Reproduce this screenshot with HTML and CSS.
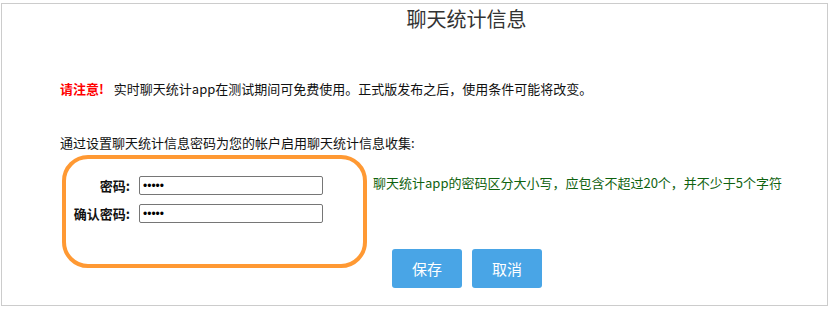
FILE: index.html
```html
<!DOCTYPE html>
<html lang="zh-CN">
<head>
<meta charset="utf-8">
<title>聊天统计信息</title>
<link rel="stylesheet" href="styles.css">
</head>
<body>
<div class="panel">
  <h1 class="title">聊天统计信息</h1>
  <p class="notice"><span class="warn">请注意!</span>实时聊天统计app在测试期间可免费使用。正式版发布之后，使用条件可能将改变。</p>
  <p class="intro">通过设置聊天统计信息密码为您的帐户启用聊天统计信息收集:</p>
  <div class="form-row">
    <div class="pw-box">
      <label class="lbl" for="pw1">密码:</label>
      <input class="field" id="pw1" type="password" value="abcde">
      <label class="lbl" for="pw2">确认密码:</label>
      <input class="field" id="pw2" type="password" value="abcde">
    </div>
    <div class="side">
      <p class="hint">聊天统计app的密码区分大小写，应包含不超过20个，并不少于5个字符</p>
      <div class="actions">
        <button class="btn">保存</button>
        <button class="btn">取消</button>
      </div>
    </div>
  </div>
</div>
</body>
</html>
```

FILE: styles.css
```css
html, body {
  margin: 0;
  padding: 0;
  background: #fff;
}
body {
  font-family: "Noto Sans CJK SC", "Noto Sans", sans-serif;
  color: #111;
}
.panel {
  margin: 3px 2px 2px 1px;
  border: 1px solid #cccccc;
  height: 303px;
  box-sizing: border-box;
  padding-left: 58px;
}
.title {
  margin: 1px 0 0 0;
  padding-left: 46px;
  text-align: center;
  font-size: 20px;
  font-weight: normal;
  line-height: 28px;
  color: #333;
}
.notice {
  margin: 47px 0 0 0;
  font-size: 13px;
  line-height: 18px;
}
.warn {
  color: #ff0000;
  font-weight: bold;
  font-size: 13px;
  margin-right: 10px;
}
.intro {
  margin: 36px 0 0 0;
  font-size: 13px;
  line-height: 18px;
}
.form-row {
  display: flex;
  align-items: flex-start;
  margin-top: 3px;
  margin-left: 2px;
}
.pw-box {
  border: 4px solid #ff9933;
  border-radius: 26px;
  width: 305px;
  height: 113px;
  box-sizing: border-box;
  padding: 17px 0 0 0;
  display: grid;
  grid-template-columns: 64px 184px;
  grid-auto-rows: 19px;
  column-gap: 9px;
  row-gap: 9px;
  align-content: start;
}
.lbl {
  font-size: 13px;
  font-weight: bold;
  text-align: right;
  line-height: 19px;
  color: #111;
}
.field {
  box-sizing: border-box;
  width: 184px;
  height: 19px;
  margin: 0;
  padding: 0 3px;
  border: 1px solid #767676;
  border-radius: 2px;
  font-size: 12px;
  font-family: "Liberation Sans", sans-serif;
  color: #000;
}
.side {
  margin-left: 6px;
  padding-top: 19px;
}
.hint {
  margin: 0;
  font-size: 13px;
  line-height: 18px;
  color: #0f620f;
}
.actions {
  display: flex;
  gap: 10px;
  margin-top: 57px;
  margin-left: 19px;
}
.btn {
  width: 70px;
  height: 39px;
  border: none;
  border-radius: 3px;
  background: #49a5e6;
  color: #fff;
  font-family: "Noto Sans CJK SC", sans-serif;
  font-size: 15px;
  padding: 0;
}
```
